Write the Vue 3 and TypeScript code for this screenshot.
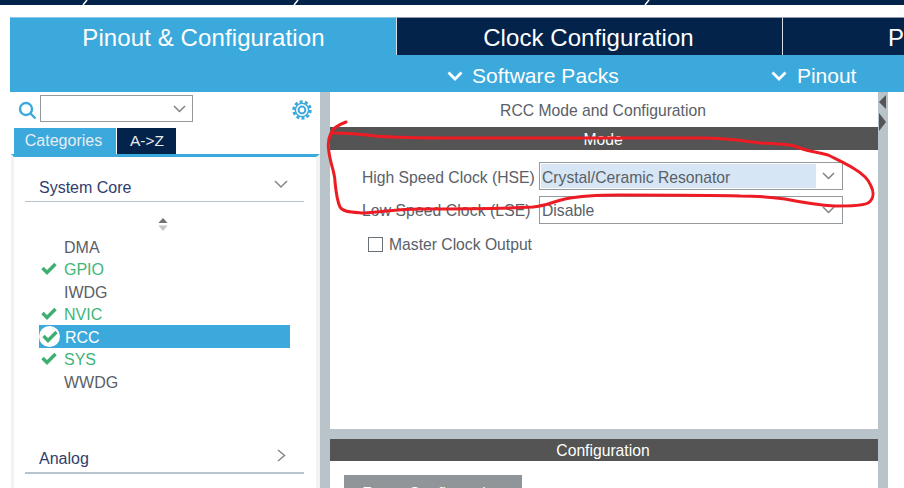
<template>
  <div class="page">
    <div class="topbar">
      <svg class="topbar-marks" width="904" height="5" viewBox="0 0 904 5">
        <path d="M83 5 L87 0 M294 5 L298 0 M645 5 L649 0" />
      </svg>
    </div>

    <div class="tabs">
      <div class="tab tab--active">Pinout &amp; Configuration</div>
      <div class="tab tab--clock">Clock Configuration</div>
      <div class="tab tab--cut">P</div>
    </div>

    <div class="subbar">
      <div class="subitem subitem--packs">
        <svg width="16" height="10" viewBox="0 0 16 10"><path d="M1.5 1.5 L8 8 L14.5 1.5" /></svg>
        <span>Software Packs</span>
      </div>
      <div class="subitem subitem--pinout">
        <svg width="16" height="10" viewBox="0 0 16 10"><path d="M1.5 1.5 L8 8 L14.5 1.5" /></svg>
        <span>Pinout</span>
      </div>
    </div>

    <div class="body">
      <aside class="left">
        <div class="search">
          <svg class="search-icon" width="19" height="19" viewBox="0 0 19 19">
            <circle cx="8" cy="8" r="6" />
            <path d="M12.5 12.5 L17.5 17.5" />
          </svg>
          <div class="search-box">
            <svg width="13" height="8" viewBox="0 0 13 8"><path d="M1 1 L6.5 6.5 L12 1" /></svg>
          </div>
          <svg class="gear" width="22" height="22" viewBox="0 0 22 22">
            <circle cx="11" cy="11" r="3.4" />
            <circle class="gear-teeth" cx="11" cy="11" r="8.2" />
            <circle class="gear-ring" cx="11" cy="11" r="6.6" />
          </svg>
        </div>

        <div class="cat-tabs">
          <div class="cat-tab cat-tab--active">Categories</div>
          <div class="cat-tab">A-&gt;Z</div>
        </div>

        <div class="cat-panel">
          <div class="cat-head">
            <span>System Core</span>
            <svg width="14" height="9" viewBox="0 0 14 9"><path d="M1 1 L7 7 L13 1" /></svg>
          </div>

          <div class="sorter">
            <svg width="10" height="13" viewBox="0 0 10 14">
              <path class="sorter-up" d="M5 0 L10 5.5 H0 Z" />
              <path class="sorter-down" d="M0 8 H10 L5 14 Z" />
            </svg>
          </div>

          <ul class="items">
            <li
              v-for="item in items"
              :key="item.name"
              class="item"
              :class="{ 'item--ok': item.ok, 'item--selected': item.selected }"
            >
              <span class="item-mark">
                <svg v-if="item.ok" width="16" height="13" viewBox="0 0 16 13">
                  <path d="M1.5 6 L6 10.5 L14.5 2" />
                </svg>
              </span>
              <span class="item-name">{{ item.name }}</span>
            </li>
          </ul>

          <div class="cat-head cat-head--analog">
            <span>Analog</span>
            <svg width="9" height="13" viewBox="0 0 9 13"><path d="M1 1 L7.5 6.5 L1 12" /></svg>
          </div>
        </div>
      </aside>

      <div class="splitter" />

      <main class="main">
        <section class="mode">
          <h2 class="title">RCC Mode and Configuration</h2>
          <div class="bar">Mode</div>
          <div class="form">
            <div class="row">
              <label class="row-label">High Speed Clock (HSE)</label>
              <div class="select select--on">
                <span class="select-value">Crystal/Ceramic Resonator</span>
                <svg width="13" height="8" viewBox="0 0 13 8"><path d="M1 1 L6.5 6.5 L12 1" /></svg>
              </div>
            </div>
            <div class="row row--low">
              <label class="row-label">Low Speed Clock (LSE)</label>
              <div class="select">
                <span class="select-value">Disable</span>
                <svg width="13" height="8" viewBox="0 0 13 8"><path d="M1 1 L6.5 6.5 L12 1" /></svg>
              </div>
            </div>
            <div class="check">
              <span class="check-box" />
              <span>Master Clock Output</span>
            </div>
          </div>
        </section>

        <section class="config">
          <div class="bar bar--config">Configuration</div>
          <div class="reset">Reset Configuration</div>
        </section>
      </main>

      <div class="scroll">
        <span class="scroll-arrow scroll-arrow--left" />
        <span class="scroll-arrow scroll-arrow--right" />
      </div>
    </div>

    <!-- hand-drawn red marking over the screenshot -->
    <svg class="scribble" width="904" height="488" viewBox="0 0 904 488">
      <path
        d="M346 122 C338 125 333 128 331 133 C327 141 328 148 330 158 C332 168 335 174 335 182 C336 192 337 201 340 207
           C343 212 350 212 363 213 C385 212 395 209 420 209 C455 209 500 209 533 207 C545 206 552 202 565 199
           C580 196 600 195 620 195 C660 195 710 195 740 196 C755 196 770 197 785 199 C800 202 815 205 835 206
           C850 206 862 206 868 203 C874 199 874 192 871 186 C868 178 860 172 853 168 C845 163 838 160 828 155
           C818 152 810 152 800 148 C790 144 780 144 760 143 C745 141 730 138 700 138 C650 138 560 138 452 138
           C420 138 400 138 375 136 C360 134 345 133 333 133"
      />
    </svg>
  </div>
</template>

<script setup lang="ts">
interface PeripheralItem {
  name: string;
  ok?: boolean;
  selected?: boolean;
}

const items: PeripheralItem[] = [
  { name: 'DMA' },
  { name: 'GPIO', ok: true },
  { name: 'IWDG' },
  { name: 'NVIC', ok: true },
  { name: 'RCC', ok: true, selected: true },
  { name: 'SYS', ok: true },
  { name: 'WWDG' },
];
</script>

<style>
html,
body {
  margin: 0;
  background: #fff;
}
</style>

<style scoped>
.page {
  position: relative;
  width: 904px;
  height: 488px;
  overflow: hidden;
  background: #fff;
  font-family: "Liberation Sans", Arial, sans-serif;
  font-size: 16px;
  color: #596068;
}

/* Top strip */
.topbar {
  height: 5px;
  background: #03234b;
}

.topbar-marks {
  display: block;
}

.topbar-marks path {
  fill: none;
  stroke: #fff;
  stroke-width: 1.5;
}

/* Main tabs */
.tabs {
  display: flex;
  height: 38px;
  margin: 12px 0 0 10px;
}

.tab {
  box-sizing: border-box;
  flex: 0 0 386px;
  border-top: 1px solid #8f9ba6;
  border-left: 1px solid #d7dde2;
  background: #03234b;
  color: #fff;
  font-size: 24px;
  line-height: 39px;
  text-align: center;
}

.tab--active {
  border-top-color: #8cc8e6;
  border-left-color: #3ba9dc;
  background: #3ba9dc;
  letter-spacing: 0.1px;
}

.tab--clock {
  letter-spacing: 0.06px;
  padding-right: 2px;
}

.tab--cut {
  flex: 1;
  padding-left: 105px;
  text-align: left;
}

/* Sub toolbar */
.subbar {
  box-sizing: border-box;
  display: flex;
  height: 37px;
  margin-left: 10px;
  padding-top: 5px;
  background: #3ba9dc;
  color: #fff;
  font-size: 21px;
}

.subitem {
  display: flex;
  align-items: center;
}

.subitem svg path {
  fill: none;
  stroke: #fff;
  stroke-width: 2.8;
}

.subitem--packs {
  margin-left: 437px;
  gap: 9px;
  letter-spacing: 0.07px;
}

.subitem--pinout {
  margin-left: 152px;
  gap: 10px;
}

/* Body columns */
.body {
  display: flex;
  height: 396px;
  margin-left: 10px;
}

.left {
  box-sizing: border-box;
  flex: 0 0 310px;
}

.search {
  display: flex;
  align-items: flex-start;
  height: 36px;
  padding: 3px 0 0 8px;
  box-sizing: border-box;
}

.search-icon {
  margin-top: 6px;
}

.search-icon circle,
.search-icon path {
  fill: none;
  stroke: #3ba9dc;
  stroke-width: 2.4;
}

.search-box {
  box-sizing: border-box;
  display: flex;
  align-items: center;
  justify-content: flex-end;
  width: 153px;
  height: 27px;
  margin-left: 3px;
  padding-right: 6px;
  border: 1px solid #94999d;
}

.search-box path,
.select path {
  fill: none;
  stroke: #7e8387;
  stroke-width: 1.5;
}

.gear {
  margin: 4px 0 0 98px;
}

.gear circle {
  fill: none;
  stroke: #3ba9dc;
  stroke-width: 2;
}

.gear .gear-teeth {
  stroke-width: 3;
  stroke-dasharray: 3 2.15;
}

.gear .gear-ring {
  stroke-width: 1.4;
}

.cat-tabs {
  display: flex;
  gap: 1px;
  height: 26px;
  margin-left: 4px;
}

.cat-tab {
  box-sizing: border-box;
  width: 59px;
  padding-left: 1px;
  background: #03234b;
  color: #e8ecf0;
  font-size: 15.5px;
  line-height: 25px;
  text-align: center;
}

.cat-tab--active {
  width: 102px;
  padding: 0 3px 0 0;
  background: #3ba9dc;
  font-size: 16px;
}

.cat-panel {
  box-sizing: border-box;
  height: 334px;
  margin-left: 1px;
  padding: 0 12px 0 11px;
  border-top: 3px solid #3ba9dc;
  border-left: 3px solid #f1f2f4;
  border-right: 4px solid #f1f2f4;
}

.cat-head {
  box-sizing: border-box;
  display: flex;
  align-items: center;
  justify-content: space-between;
  height: 45px;
  padding: 18px 16px 0 14px;
  border-bottom: 1px solid #b9c2c8;
  color: #2f3d6c;
}

.cat-head path {
  fill: none;
  stroke: #83888c;
  stroke-width: 1.5;
}

.cat-head svg {
  margin-top: -8px;
}

.cat-head--analog {
  height: 30px;
  margin-top: 51.5px;
  padding-top: 2px;
  padding-right: 18px;
  border-bottom-width: 2px;
  border-bottom-color: #b7c4cf;
}

.sorter {
  box-sizing: border-box;
  display: flex;
  justify-content: center;
  height: 33px;
  padding-top: 16px;
  margin-right: 3px;
}

.sorter-up {
  fill: #6f7478;
}

.sorter-down {
  fill: #c2c6c9;
}

.items {
  width: 251px;
  margin: 0 0 0 14px;
  padding: 0;
  list-style: none;
}

.item {
  display: flex;
  align-items: center;
  height: 22.5px;
}

.item-mark {
  display: flex;
  align-items: center;
  justify-content: center;
  width: 20px;
  height: 22px;
  margin-right: 5px;
}

.item-mark svg {
  display: block;
}

.item-mark path {
  fill: none;
  stroke: #3fae71;
  stroke-width: 3.4;
}

.item-name {
  padding-top: 3px;
}

.item--ok {
  color: #3eb579;
}

.item--selected {
  background: #3ba9dc;
  color: #fff;
}

.item--selected .item-mark {
  box-sizing: border-box;
  width: 21px;
  height: 21px;
  margin-right: 5px;
  border-radius: 50%;
  background: #fff;
}

/* Right side */
.splitter {
  flex: 0 0 10px;
  background: #b8c4ca;
}

.main {
  display: flex;
  flex: 0 0 548px;
  flex-direction: column;
  font-size: 15.7px;
}

.mode {
  height: 337px;
}

.title {
  height: 35px;
  margin: 0;
  padding-right: 2px;
  font-size: 15.7px;
  font-weight: 400;
  line-height: 38px;
  text-align: center;
}

.bar {
  height: 23px;
  padding-right: 2px;
  background: #535453;
  color: #fff;
  line-height: 25px;
  text-align: center;
}

.form {
  padding: 12px 35px 0 32px;
}

.row {
  display: flex;
  align-items: center;
  height: 28px;
  margin-bottom: 6px;
}

.row-label {
  flex: 0 0 177px;
  padding-top: 3px;
}

.row--low .row-label {
  padding-top: 1px;
  letter-spacing: 0.1px;
}

.select {
  box-sizing: border-box;
  display: flex;
  align-items: center;
  justify-content: space-between;
  flex: 0 0 304px;
  height: 28px;
  padding: 1px 7px 1px 1px;
  border: 1px solid #94999d;
}

.select-value {
  align-self: stretch;
  flex: 1;
  margin-right: 6px;
  padding-left: 1px;
  line-height: 25px;
}

.select--on .select-value {
  background: #d6e6f4;
  line-height: 27px;
}

.check {
  display: flex;
  align-items: center;
  gap: 6px;
  margin: 12px 0 0 6px;
}

.check-box {
  box-sizing: border-box;
  width: 15px;
  height: 15px;
  margin-top: -1px;
  border: 1px solid #6b7075;
}

.config {
  flex: 1;
  overflow: hidden;
  border-top: 10px solid #b8c4ca;
}

.bar--config {
  height: 22px;
  line-height: 23px;
}

.reset {
  width: 178px;
  height: 28px;
  margin: 14px 0 0 14px;
  background: #8f9599;
  color: #fff;
  font-size: 16px;
  line-height: 38px;
  text-align: center;
}

.scroll {
  position: relative;
  flex: 0 0 10px;
  background: #b8c4ca;
}

.scroll-arrow {
  position: absolute;
  left: 1px;
  width: 0;
  height: 0;
}

.scroll-arrow--left {
  top: 3px;
  border-top: 7px solid transparent;
  border-bottom: 7px solid transparent;
  border-right: 7px solid #535453;
}

.scroll-arrow--right {
  top: 21px;
  border-top: 9px solid transparent;
  border-bottom: 9px solid transparent;
  border-left: 7px solid #535453;
}

/* Red annotation */
.scribble {
  position: absolute;
  top: 0;
  left: 0;
  pointer-events: none;
}

.scribble path {
  fill: none;
  stroke: #ed1c24;
  stroke-width: 3;
  stroke-linecap: round;
}
</style>
